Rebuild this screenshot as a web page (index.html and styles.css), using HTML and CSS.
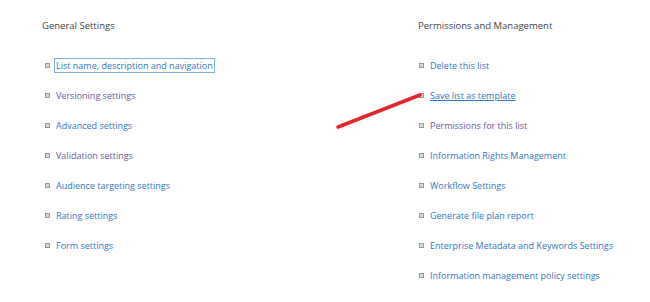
FILE: index.html
```html
<!DOCTYPE html>
<html>
<head>
<meta charset="utf-8">
<link rel="stylesheet" href="styles.css">
</head>
<body>
<div class="page">
  <div class="col col-left">
    <h3 class="heading">General Settings</h3>
    <ul class="links">
      <li><a class="link focused">List name, description and navigation</a></li>
      <li><a class="link visited">Versioning settings</a></li>
      <li><a class="link">Advanced settings</a></li>
      <li><a class="link visited">Validation settings</a></li>
      <li><a class="link">Audience targeting settings</a></li>
      <li><a class="link">Rating settings</a></li>
      <li><a class="link">Form settings</a></li>
    </ul>
  </div>
  <div class="col col-right">
    <h3 class="heading">Permissions and Management</h3>
    <ul class="links">
      <li><a class="link">Delete this list</a></li>
      <li><a class="link hover">Save list as template</a></li>
      <li><a class="link visited">Permissions for this list</a></li>
      <li><a class="link">Information Rights Management</a></li>
      <li><a class="link">Workflow Settings</a></li>
      <li><a class="link">Generate file plan report</a></li>
      <li><a class="link">Enterprise Metadata and Keywords Settings</a></li>
      <li><a class="link">Information management policy settings</a></li>
    </ul>
  </div>
  <svg class="arrow" width="100" height="50" viewBox="0 0 100 50">
    <line x1="4" y1="39" x2="86" y2="7" stroke="#e3262d" stroke-width="3.5" stroke-linecap="round"/>
  </svg>
</div>
</body>
</html>
```
FILE: styles.css
```css
html, body {
  margin: 0;
  padding: 0;
  background: #ffffff;
}
.page {
  position: relative;
  display: flex;
  padding: 16px 0 0 42px;
  font-family: "Open Sans", "Noto Sans", sans-serif;
}
.col-left {
  width: 374px;
}
.col-right {
  flex: 1;
}
.heading {
  margin: 0 0 15px 0;
  font-size: 9.5px;
  line-height: 19px;
  font-weight: normal;
  color: #444444;
}
.col-right .heading {
  margin-left: 2px;
}
.links {
  list-style: none;
  margin: 0;
  padding: 0;
}
.links li {
  display: flex;
  align-items: center;
  height: 30px;
  white-space: nowrap;
}
.links li::before {
  content: "";
  width: 3px;
  height: 3px;
  border: 1px solid #9a9a9a;
  background: #d8d8d8;
  margin: 0 6px 0 3px;
  flex: none;
}
.link {
  font-size: 9px;
  line-height: 13px;
  color: #3277bf;
  text-decoration: none;
  border: 1px solid transparent;
  padding: 0 1px;
  margin-left: -2px;
}
.link.visited {
  color: #6b5a9c;
}
.link.focused {
  border-color: #7fb2e6;
}
.link.hover {
  text-decoration: underline;
}
.arrow {
  position: absolute;
  left: 334px;
  top: 88px;
}
```
